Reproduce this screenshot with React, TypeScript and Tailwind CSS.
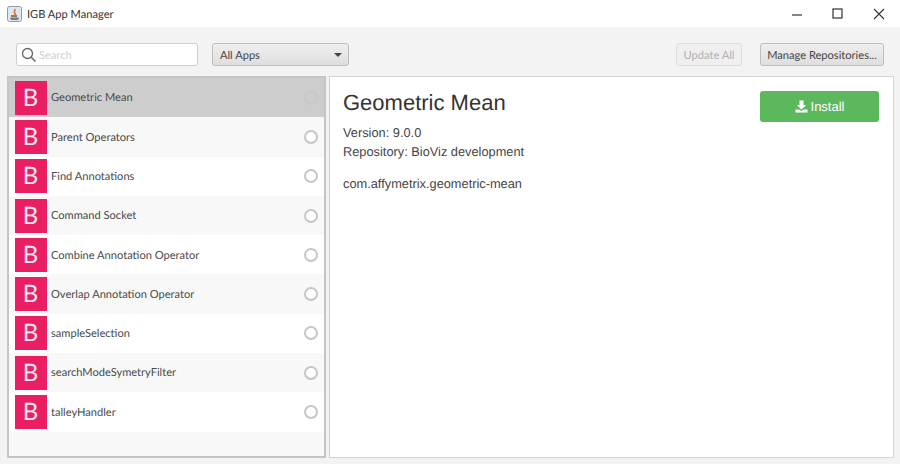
import React from "react";

const items = [
  "Geometric Mean",
  "Parent Operators",
  "Find Annotations",
  "Command Socket",
  "Combine Annotation Operator",
  "Overlap Annotation Operator",
  "sampleSelection",
  "searchModeSymetryFilter",
  "talleyHandler",
];

function Row({ name, index }: { name: string; index: number }) {
  const selected = index === 0;
  const bg = selected ? "bg-[#cdcdcd]" : index % 2 === 0 ? "bg-white" : "bg-[#f8f8f8]";
  return (
    <div className={`flex h-[39.3px] shrink-0 items-center pl-[6px] pr-[6px] ${bg}`}>
      <div className="flex h-[34px] w-[32px] shrink-0 items-center justify-center bg-[#ea1f63] pr-[1px] text-[24px] leading-none text-[#fde8ef]">
        B
      </div>
      <div className="ml-[4px] flex-1 pt-[2px] text-[11.1px] text-[#4a4a4a]">{name}</div>
      <div className={`h-[14px] w-[14px] rounded-full border-2 ${selected ? "border-[#c8c8c8]" : "border-[#c6c6c6] bg-white"}`} />
    </div>
  );
}

export default function App() {
  return (
    <div className="flex h-[464px] w-[900px] flex-col overflow-hidden bg-[#f3f3f3] font-['Lato','Open_Sans',sans-serif] [text-rendering:geometricPrecision]">
      <div className="flex h-[27px] shrink-0 items-center bg-white pl-[7px]">
        <svg width="15" height="16" viewBox="0 0 15 16" className="shrink-0">
          <rect x="0.5" y="0.5" width="14" height="15" rx="2" fill="#dfe6ef" stroke="#8d9bb0" />
          <path d="M3 11.5h9l-1 2.5H4z" fill="#5f7ea6" />
          <path d="M7.5 3c1.5 1.5-1 2.5 0 4s1.5 2 0 3" fill="none" stroke="#d9702a" strokeWidth="1.6" />
          <path d="M4 9h6v2H4z" fill="#a9753f" />
        </svg>
        <div className="ml-[5px] pt-[4px] text-[11.1px] text-[#333]">IGB App Manager</div>
        <div className="ml-auto flex items-center">
          <svg width="12" height="12" viewBox="0 0 12 12" className="mr-[29px]">
            <path d="M1 7h10" stroke="#333" strokeWidth="1.2" />
          </svg>
          <svg width="11" height="11" viewBox="0 0 11 11" className="mr-[30px]">
            <rect x="1" y="1" width="9" height="9" fill="none" stroke="#333" strokeWidth="1.2" />
          </svg>
          <svg width="12" height="12" viewBox="0 0 12 12" className="mr-[15px]">
            <path d="M1 1l10 10M11 1L1 11" stroke="#333" strokeWidth="1.1" />
          </svg>
        </div>
      </div>

      <div className="flex h-[49px] shrink-0 items-center pt-[6px] pl-[16px] pr-[16px]">
        <div className="flex h-[23px] w-[182px] items-center rounded-[3px] border border-[#cfcfcf] bg-white pl-[4px]">
          <svg width="16" height="16" viewBox="0 0 16 16" className="shrink-0">
            <circle cx="6.5" cy="6.5" r="5" fill="none" stroke="#666" strokeWidth="1.3" />
            <path d="M10.2 10.2l4.3 4.3" stroke="#666" strokeWidth="1.5" />
          </svg>
          <span className="ml-[2px] pt-[4px] text-[11.1px] text-[#d0d0d0]">Search</span>
        </div>
        <div className="ml-[14px] flex h-[23px] w-[137px] items-center rounded-[3px] border border-[#bdbdbd] bg-gradient-to-b from-[#efefef] to-[#dedede] pl-[7px] pr-[6px] text-[11.1px] text-[#444]">
          <span className="pt-[4px]">All Apps</span>
          <span className="ml-auto h-0 w-0 border-x-[4px] border-t-[4px] border-x-transparent border-t-[#444]" />
        </div>
        <div className="ml-auto flex h-[23px] w-[66px] items-center justify-center rounded-[3px] border border-[#dddddd] bg-[#efefef] pt-[4px] text-[11.1px] text-[#b0b0b0]">
          Update All
        </div>
        <div className="ml-[18px] flex h-[23px] w-[124px] items-center justify-center rounded-[3px] border border-[#bdbdbd] bg-gradient-to-b from-[#efefef] to-[#dedede] pt-[4px] text-[11.1px] text-[#444]">
          Manage Repositories...
        </div>
      </div>

      <div className="flex h-[382px] shrink-0 pl-[7px] pr-[6px]">
        <div className="flex w-[319px] shrink-0 flex-col border-2 border-[#c4c4c4] bg-[#f8f8f8]">
          {items.map((name, i) => (
            <Row key={name} name={name} index={i} />
          ))}
        </div>
        <div className="ml-[3px] flex flex-1 items-start justify-between border border-[#d4d4d4] bg-white pl-[13px] pr-[14px] pt-[12px] font-['Liberation_Sans',sans-serif]">
          <div>
            <div className="text-[22px] leading-[28px] text-[#333]">Geometric Mean</div>
            <div className="mt-[6px] text-[12.8px] leading-[19px] text-[#444]">Version: 9.0.0</div>
            <div className="text-[12.8px] leading-[19px] text-[#444]">Repository: BioViz development</div>
            <div className="mt-[13px] text-[12.8px] leading-[19px] text-[#444]">com.affymetrix.geometric-mean</div>
          </div>
          <div className="mt-[2px] flex h-[31px] w-[119px] items-center justify-center rounded-[3px] bg-[#5cb85c] text-[13px] text-white">
            <svg width="13" height="13" viewBox="0 0 13 13" className="mr-[3px]">
              <path d="M4.5 0.5h4v4.5h2.7L6.5 9.5 1.8 5h2.7z" fill="#fff" />
              <path d="M0.5 9.5h3.4l2.6 1.6 2.6-1.6h3.4v3h-12z" fill="#fff" />
            </svg>
            Install
          </div>
        </div>
      </div>
    </div>
  );
}
